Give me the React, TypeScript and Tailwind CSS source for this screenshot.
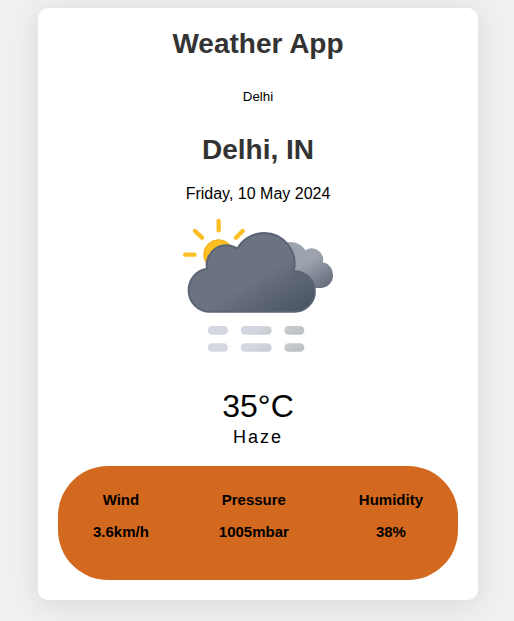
const stats = [
  { label: 'Wind', value: '3.6km/h' },
  { label: 'Pressure', value: '1005mbar' },
  { label: 'Humidity', value: '38%' },
];

function HazeIcon() {
  return (
    <svg viewBox="0 0 510 450" className="mt-[7px] ml-[112px] block h-[150px] w-[170px]" aria-hidden="true">
      <defs>
        <linearGradient id="front" gradientUnits="userSpaceOnUse" x1="170" y1="110" x2="320" y2="350">
          <stop offset="0" stopColor="#6b7280" />
          <stop offset="0.45" stopColor="#6b7280" />
          <stop offset="1" stopColor="#4b5563" />
        </linearGradient>
        <linearGradient id="back" gradientUnits="userSpaceOnUse" x1="370" y1="100" x2="450" y2="232">
          <stop offset="0" stopColor="#9ca3af" />
          <stop offset="0.45" stopColor="#9ca3af" />
          <stop offset="1" stopColor="#6b7280" />
        </linearGradient>
        <linearGradient id="mist" x1="0" y1="0" x2="1" y2="0.5">
          <stop offset="0" stopColor="#d4d7df" />
          <stop offset="0.5" stopColor="#d4d7df" />
          <stop offset="1" stopColor="#c8ccd3" />
        </linearGradient>
        <linearGradient id="mistDark" x1="0" y1="0" x2="1" y2="1">
          <stop offset="0" stopColor="#cacdd1" />
          <stop offset="1" stopColor="#b9bdc2" />
        </linearGradient>
      </defs>
      <circle cx="146" cy="134" r="45" fill="#fbbf24" stroke="#f8af18" strokeWidth="3" />
      <path
        d="M146 33V61M45.500 134H73.500M75 63L96 83M218 63L198 83"
        stroke="#fbbf24"
        strokeWidth="13"
        strokeLinecap="round"
      />
      <path
        d="M335 103A53 53 0 0 1 406 121A35 35 0 0 1 459 157A38 38 0 0 1 489 195A38 38 0 0 1 451 234H340Z"
        fill="url(#back)"
      />
      <path
        d="M120 305.500A64 64 0 0 1 56 241A64.500 64.500 0 0 1 111 176A59 59 0 0 1 202 116A92 92 0 0 1 280 69A92 92 0 0 1 371 183.500A61 61 0 0 1 434.500 244A61 61 0 0 1 373 305.500Z"
        fill="url(#front)"
        stroke="#5b6475"
        strokeWidth="6"
      />
      {[348, 399.5].map((y) => (
        <g key={y}>
          <rect x="113" y={y} width="61" height="26" rx="13" fill="#d4d7df" />
          <rect x="212" y={y} width="93" height="26" rx="13" fill="url(#mist)" />
          <rect x="343" y={y} width="60" height="26" rx="13" fill="url(#mistDark)" />
        </g>
      ))}
    </svg>
  );
}

export default function App() {
  return (
    <div className="h-[621px] overflow-hidden bg-[#f0f0f0] pt-2 pl-[38px] font-['Liberation_Sans',Arial,sans-serif] text-black">
      <main className="h-[592px] w-[440px] rounded-[10px] bg-white p-5 text-center shadow-[0_4px_30px_rgba(0,0,0,0.1)]">
        <h1 className="text-[28px] leading-8 font-bold text-[#333]">Weather App</h1>
        <p className="mt-[29px] text-[13.333px] leading-[15px]">Delhi</p>
        <h2 className="mt-[30px] text-[28px] leading-8 font-bold text-[#333]">Delhi, IN</h2>
        <p className="mt-[19px] text-base leading-[18px]">Friday, 10 May 2024</p>
        <HazeIcon />
        <p className="mt-7 text-[32px] leading-9">35°C</p>
        <p className="mt-[3px] text-lg leading-5 tracking-[2px]">Haze</p>
        <section className="mt-[19px] flex h-[114px] justify-around rounded-[50px] bg-[#d2691e] pt-[25px] text-[15px] leading-[17px] font-bold">
          {stats.map((s) => (
            <div key={s.label} className="flex flex-col gap-[15px]">
              <p>{s.label}</p>
              <p>{s.value}</p>
            </div>
          ))}
        </section>
      </main>
    </div>
  );
}
